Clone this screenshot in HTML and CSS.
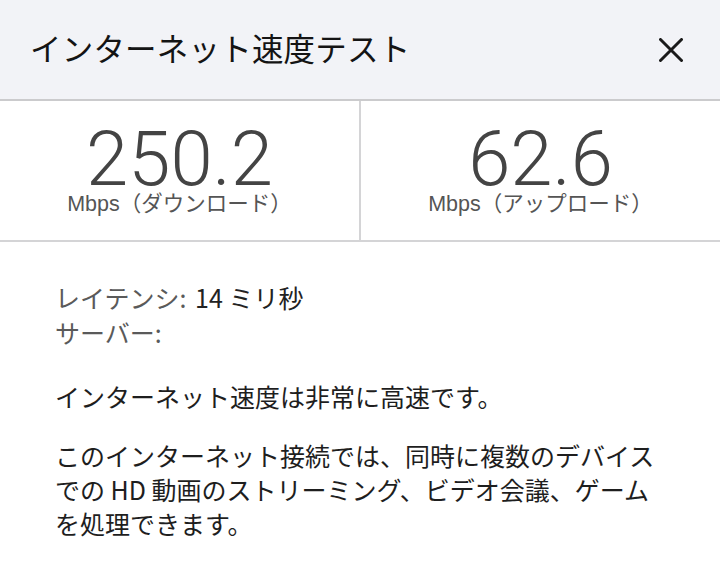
FILE: index.html
```html
<!DOCTYPE html>
<html lang="ja">
<head>
<meta charset="utf-8">
<title>インターネット速度テスト</title>
<link rel="stylesheet" href="styles.css">
</head>
<body>
<div class="panel">
  <header class="header">
    <h1 class="title">インターネット速度テスト</h1>
    <button class="close" aria-label="閉じる">
      <svg width="24" height="24" viewBox="0 0 24 24"><path d="M1.5 1.5 L22.5 22.5 M22.5 1.5 L1.5 22.5" stroke="#1a1a1a" stroke-width="3" stroke-linecap="round" fill="none"/></svg>
    </button>
  </header>
  <section class="stats">
    <div class="stat">
      <div class="value">250.2</div>
      <div class="unit">Mbps（ダウンロード）</div>
    </div>
    <div class="stat stat-right">
      <div class="value">62.6</div>
      <div class="unit">Mbps（アップロード）</div>
    </div>
  </section>
  <section class="info">
    <div class="meta">
      <div class="row"><span class="label">レイテンシ:</span> <span class="val">14 ミリ秒</span></div>
      <div class="row"><span class="label">サーバー:</span></div>
    </div>
    <p class="lead">インターネット速度は非常に高速です。</p>
    <p class="desc">このインターネット接続では、同時に複数のデバイスでの HD 動画のストリーミング、ビデオ会議、ゲームを処理できます。</p>
  </section>
</div>
</body>
</html>
```

FILE: styles.css
```css
* { box-sizing: border-box; }
html, body { margin: 0; padding: 0; background: #ffffff; }
body {
  width: 720px;
  height: 566px;
  overflow: hidden;
  font-family: "Noto Sans CJK JP", "Noto Sans", sans-serif;
}
.panel { width: 720px; }
.header {
  height: 101px;
  background: #f2f3f7;
  border-bottom: 2px solid #cbcbcd;
  display: flex;
  align-items: center;
  justify-content: space-between;
  padding: 0 37px 6px 30px;
}
.title {
  margin: 0;
  font-size: 31.5px;
  font-weight: 400;
  color: #141414;
  line-height: 40px;
  letter-spacing: 0.2px;
}
.close {
  border: 0;
  background: transparent;
  padding: 0;
  width: 24px;
  height: 24px;
  display: flex;
  margin-top: 6px;
}
.stats {
  display: grid;
  grid-template-columns: 359px 1fr;
  border-bottom: 2px solid #d4d4d6;
}
.stat {
  display: flex;
  flex-direction: column;
  align-items: center;
  padding: 24px 0 25px;
}
.stat-right { border-left: 2px solid #d4d4d6; }
.value {
  font-family: "Roboto", "Liberation Sans", Arial, sans-serif;
  font-weight: 300;
  font-size: 76px;
  line-height: 68px;
  color: #444444;
}
.unit {
  font-family: "Liberation Sans", "Noto Sans CJK JP", sans-serif;
  font-size: 21.5px;
  line-height: 22px;
  color: #555555;
}
.info {
  padding: 38px 55px 0;
  font-size: 25px;
  color: #1e1e1e;
}
.row { line-height: 35px; }
.label { color: #5a5a5a; }
.val { color: #222222; margin-left: 3px; }
.lead {
  margin: 29px 0 0;
  line-height: 34px;
}
.desc {
  margin: 25px 0 0;
  line-height: 34px;
}
```
